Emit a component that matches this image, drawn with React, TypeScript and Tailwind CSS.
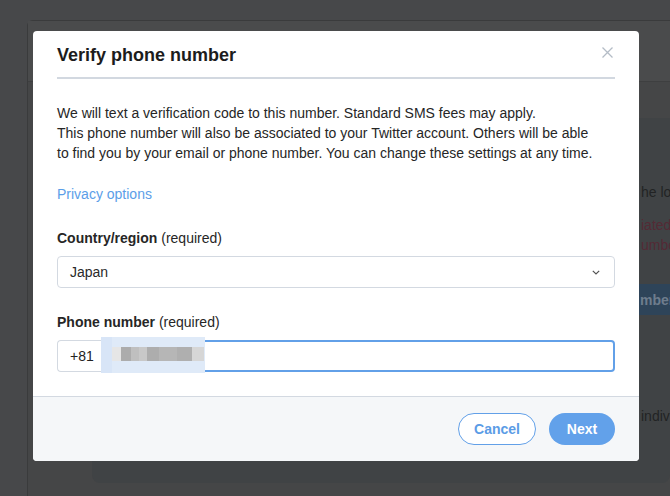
import React from "react";

export default function App() {
  return (
    <div className="relative w-[670px] h-[496px] overflow-hidden bg-[#47484a] font-['Liberation_Sans',Arial,sans-serif]">
      {/* faux page behind the overlay */}
      <div className="h-full pt-[20px] pl-[27px]">
        <div className="h-full flex flex-col rounded-tl-[6px] border-l border-t border-[#3a3b3c] bg-[#454647]">
          <div className="h-[61px] shrink-0 border-b border-[#3e3f40] bg-[#4a4b4c]" />
          <div className="flex-1 flex flex-col pl-[64px] pt-[36px] pb-[13px]">
            <div className="flex-1 flex flex-col overflow-hidden rounded-b-[8px] bg-[#404345] pl-[549px] pt-[64px] text-[14px] leading-[20px] whitespace-nowrap">
              <div className="text-[#222324]">he lo</div>
              <div className="mt-[13px] text-[#542a35]">iated</div>
              <div className="text-[#542a35]">umbe</div>
              <div className="mt-[29px] -ml-[20px] h-[31px] flex items-center bg-[#2e4459] pl-[19px] font-bold text-[#6e7d8d]">
                mber
              </div>
              <div className="mt-[91px] text-[#222324]">indiv</div>
            </div>
          </div>
        </div>
      </div>

      {/* modal */}
      <div className="absolute left-[33px] top-[31px] w-[606px] h-[430px] flex flex-col overflow-hidden rounded-[4px] bg-white">
        <div className="px-[24px]">
          <div className="flex items-start justify-between pt-[12px]">
            <h1 className="text-[18px] leading-[24px] font-bold text-[#1c1c1c]">Verify phone number</h1>
            <svg width="11" height="11" viewBox="0 0 11 11" className="mt-[4px] mr-[2px]">
              <path d="M0.5 0.5 L10.5 10.5 M10.5 0.5 L0.5 10.5" stroke="#b4bcc6" strokeWidth="1.3" fill="none" />
            </svg>
          </div>
          <div className="mt-[10px] h-[2px] bg-[#d2d8e0]" />

          <p className="mt-[24px] text-[14px] leading-[20px] text-[#262626] whitespace-nowrap">
            We will text a verification code to this number. Standard SMS fees may apply.
            <br />
            This phone number will also be associated to your Twitter account. Others will be able
            <br />
            to find you by your email or phone number. You can change these settings at any time.
          </p>

          <div className="mt-[21px] text-[14px] leading-[20px] text-[#5b9ee8]">Privacy options</div>

          <div className="mt-[24px] text-[14px] leading-[20px] text-[#262626]">
            <span className="font-bold">Country/region</span> (required)
          </div>
          <div className="mt-[8px] h-[32px] flex items-center justify-between rounded-[4px] border border-[#d3d9e1] pl-[12px] pr-[14px]">
            <span className="text-[14px] text-[#2a2a2a]">Japan</span>
            <svg width="8" height="5" viewBox="0 0 8 5">
              <path d="M0.8 0.8 L4 4 L7.2 0.8" stroke="#555" strokeWidth="1.2" fill="none" />
            </svg>
          </div>

          <div className="mt-[24px] text-[14px] leading-[20px] text-[#262626]">
            <span className="font-bold">Phone number</span> (required)
          </div>
          <div className="relative mt-[8px] h-[32px] flex">
            <div className="w-[45px] h-full flex items-center rounded-l-[4px] border border-r-0 border-[#d3d9e1] pl-[12px] text-[14px] text-[#222]">
              +81
            </div>
            <div className="flex-1 h-full rounded-r-[4px] border-2 border-[#62a0e8]" />
            {/* redaction */}
            <div className="absolute left-[44px] top-[-3px] w-[104px] h-[36px] flex bg-[#dfeaf8]">
              <div className="w-[11px] h-full bg-[#d8e5f7]" />
              <div className="flex-1 flex flex-col">
                <div className="h-[10px]" />
                <div className="h-[14px] flex">
                  <div className="w-[9px] bg-[#e6e6e6]" />
                  <div className="w-[10px] bg-[#acacac]" />
                  <div className="w-[8px] bg-[#bfbfbf]" />
                  <div className="w-[8px] bg-[#c8c8c8]" />
                  <div className="w-[12px] bg-[#adadad]" />
                  <div className="w-[18px] bg-[#b6b6b6]" />
                  <div className="w-[15px] bg-[#afafaf]" />
                  <div className="w-[12px] bg-[#d6d6d6]" />
                </div>
              </div>
            </div>
          </div>
        </div>

        <div className="mt-[24px] flex-1 flex items-center justify-end gap-[13px] border-t border-[#d3d9e1] bg-[#f5f7f9] pr-[24px]">
          <button className="w-[78px] h-[32px] rounded-full border border-[#62a0e8] bg-white text-[14px] font-bold text-[#5b9ce6]">
            Cancel
          </button>
          <button className="w-[66px] h-[32px] rounded-full bg-[#62a1ea] text-[14px] font-bold text-white">
            Next
          </button>
        </div>
      </div>
    </div>
  );
}
